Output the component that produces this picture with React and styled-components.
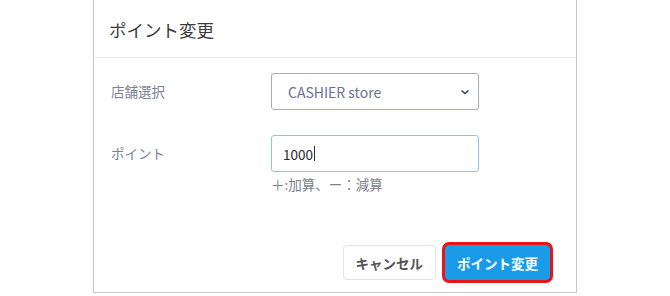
import React from "react";
import styled, { createGlobalStyle } from "styled-components";

const Global = createGlobalStyle`
  html, body { margin: 0; padding: 0; background: #ffffff; }
  body { font-family: "Noto Sans CJK JP", "Noto Sans", sans-serif; }
`;

const Modal = styled.div`
  width: 484px;
  height: 293px;
  margin: 0 auto;
  box-sizing: border-box;
  border: 1px solid #c8c8c8;
  border-top: none;
  background: #fff;
  display: flex;
  flex-direction: column;
`;

const Header = styled.div`
  height: 58px;
  box-sizing: border-box;
  border-bottom: 1px solid #ececec;
  display: flex;
  align-items: center;
  padding-left: 15px;
  padding-top: 2px;
`;

const Title = styled.h2`
  margin: 0;
  font-size: 17.5px;
  font-weight: 400;
  color: #3b3b3b;
`;

const Body = styled.div`
  display: grid;
  grid-template-columns: 160px 208px;
  row-gap: 25px;
  padding: 15px 0 0 17px;
  align-items: start;
`;

const Label = styled.div`
  font-size: 13.5px;
  color: #7b7f98;
  line-height: 37px;
`;

const Field = styled.div`
  display: flex;
  flex-direction: column;
`;

const SelectBox = styled.div`
  height: 37px;
  box-sizing: border-box;
  border: 1px solid #a9abc4;
  border-radius: 3px;
  display: flex;
  align-items: center;
  justify-content: space-between;
  padding: 0 8px 0 16px;
  font-size: 14px;
  color: #6d7190;
`;

const InputBox = styled.div`
  height: 37px;
  box-sizing: border-box;
  border: 1px solid #86c6f0;
  border-radius: 3px;
  display: flex;
  align-items: center;
  padding-left: 11px;
  font-size: 13.5px;
  color: #2a2a2a;
`;

const Caret = styled.span`
  display: inline-block;
  width: 1px;
  height: 15px;
  background: #333;
  margin-left: 1px;
`;

const Help = styled.div`
  margin-top: 2px;
  font-size: 13.5px;
  color: #7d7f8f;
`;

const Footer = styled.div`
  margin-top: auto;
  display: flex;
  justify-content: flex-end;
  align-items: center;
  gap: 9px;
  padding: 0 26px 12px 0;
`;

const Button = styled.button`
  font-family: "Noto Sans CJK JP", "Noto Sans", sans-serif;
  font-size: 13.5px;
  font-weight: 700;
  height: 35px;
  padding: 0 ${(p) => (p.$primary ? "11px" : "12px")};
  border-radius: 4px;
  border: 1px solid ${(p) => (p.$primary ? "#1a9be8" : "#dfe3ee")};
  background: ${(p) => (p.$primary ? "#1a9be8" : "#fff")};
  color: ${(p) => (p.$primary ? "#fff" : "#555")};
  box-shadow: ${(p) => (p.$primary ? "0 0 0 3px #e8141b" : "none")};
`;

export default function App() {
  return (
    <>
      <Global />
      <Modal>
        <Header>
          <Title>ポイント変更</Title>
        </Header>
        <Body>
          <Label>店舗選択</Label>
          <Field>
            <SelectBox>
              <span>CASHIER store</span>
              <svg width="10" height="8" viewBox="0 0 10 8">
                <path d="M1.5 2.5 L5 5.5 L8.5 2.5" fill="none" stroke="#3d4060" strokeWidth="1.6" />
              </svg>
            </SelectBox>
          </Field>
          <Label>ポイント</Label>
          <Field>
            <InputBox>
              1000<Caret />
            </InputBox>
            <Help>＋:加算、ー：減算</Help>
          </Field>
        </Body>
        <Footer>
          <Button>キャンセル</Button>
          <Button $primary>ポイント変更</Button>
        </Footer>
      </Modal>
    </>
  );
}
